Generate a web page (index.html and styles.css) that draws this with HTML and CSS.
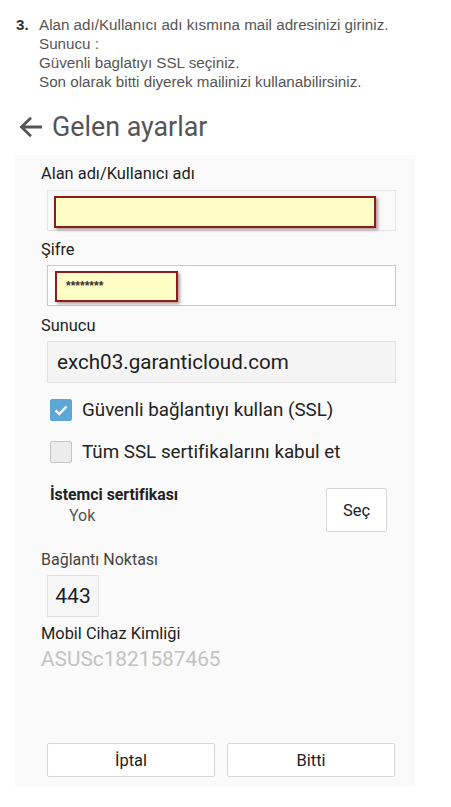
FILE: index.html
```html
<!DOCTYPE html>
<html lang="tr">
<head>
<meta charset="utf-8">
<title>Gelen ayarlar</title>
<link rel="stylesheet" href="styles.css">
</head>
<body>
<div class="instr">
  <div class="num">3.</div>
  <div class="lines">
    <div>Alan adı/Kullanıcı adı kısmına mail adresinizi giriniz.</div>
    <div>Sunucu :</div>
    <div>Güvenli baglatıyı SSL seçiniz.</div>
    <div>Son olarak bitti diyerek mailinizi kullanabilirsiniz.</div>
  </div>
</div>

<div class="title">
  <svg class="back" width="24" height="22" viewBox="0 0 24 22">
    <path d="M2.5 11 H23 M12 1.8 L2.5 11 L12 20.2" fill="none" stroke="#555" stroke-width="2.8"/>
  </svg>
  <span>Gelen ayarlar</span>
</div>

<div class="panel">
  <div class="label l1">Alan adı/Kullanıcı adı</div>
  <div class="field f1"><div class="mark m1"></div></div>

  <div class="label l2">Şifre</div>
  <div class="field f2"><div class="mark m2">********</div></div>

  <div class="label l3">Sunucu</div>
  <div class="field f3">exch03.garanticloud.com</div>

  <div class="check c1">
    <span class="box on">
      <svg width="22" height="22" viewBox="0 0 22 22"><path d="M5.5 11.5 L9.3 15 L16.5 7.5" fill="none" stroke="#fff" stroke-width="2.4"/></svg>
    </span>
    <span>Güvenli bağlantıyı kullan (SSL)</span>
  </div>
  <div class="check c2">
    <span class="box"></span>
    <span>Tüm SSL sertifikalarını kabul et</span>
  </div>

  <div class="cert">
    <div class="certtext">
      <div class="certtitle">İstemci sertifikası</div>
      <div class="certval">Yok</div>
    </div>
    <div class="btn sec">Seç</div>
  </div>

  <div class="label l4">Bağlantı Noktası</div>
  <div class="field f4">443</div>

  <div class="label l5">Mobil Cihaz Kimliği</div>
  <div class="devid">ASUSc1821587465</div>

  <div class="actions">
    <div class="btn act">İptal</div>
    <div class="btn act">Bitti</div>
  </div>
</div>
</body>
</html>
```
FILE: styles.css
```css
html, body {
  margin: 0;
  padding: 0;
  background: #ffffff;
}
body {
  width: 451px;
  font-family: Roboto, "Noto Sans", sans-serif;
  color: #222;
}
.instr {
  display: flex;
  padding: 15px 0 0 16px;
  font-family: "Liberation Sans", Arial, sans-serif;
  font-size: 15.2px;
  line-height: 19px;
  color: #555;
}
.num {
  width: 23px;
  font-weight: bold;
  color: #333;
}
.title {
  display: flex;
  align-items: center;
  margin: 20px 0 0 19px;
  height: 32px;
  font-size: 26.8px;
  color: #555;
}
.back {
  margin-right: 9px;
}
.panel {
  margin: 12px 0 0 15px;
  width: 374px;
  padding: 0 0 10px 26px;
  background: #fafafa;
}
.label {
  font-size: 16.4px;
  line-height: 20px;
  color: #222;
}
.l1 { padding-top: 9px; }
.l2 { margin-top: 9px; }
.l3 { margin-top: 10px; }
.l4 { margin-top: 18px; color: #444; font-size: 16px; }
.l5 { margin-top: 7px; }
.field {
  box-sizing: border-box;
  margin: 5px 0 0 6px;
  width: 349px;
  height: 41px;
  border: 1px solid #e6e6e6;
  background: #f9f9f9;
  position: relative;
}
.f1 { margin-top: 6px; }
.f2 {
  background: #ffffff;
  border-color: #a9d6dc;
}
.f3 {
  height: 42px;
  background: #f4f4f4;
  border-color: #e2e2e2;
  font-size: 20.6px;
  line-height: 40px;
  padding-left: 9px;
  color: #1e1e1e;
}
.f4 {
  width: 52px;
  height: 42px;
  background: #f6f6f6;
  border-color: #e2e2e2;
  font-size: 21px;
  line-height: 40px;
  text-align: center;
  color: #1e1e1e;
}
.mark {
  position: absolute;
  box-sizing: border-box;
  background: #fffdc6;
  border: 2px solid #8e1c1c;
  box-shadow: 2px 2px 3px rgba(90, 30, 30, 0.45);
}
.m1 {
  left: 6px;
  top: 5px;
  width: 322px;
  height: 32px;
}
.m2 {
  left: 7px;
  top: 5px;
  width: 123px;
  height: 31px;
  font-family: "Liberation Sans", Arial, sans-serif;
  font-size: 12px;
  font-weight: bold;
  line-height: 27px;
  padding-left: 9px;
  color: #333;
}
.check {
  display: flex;
  align-items: center;
  margin-left: 9px;
  height: 22px;
  font-size: 18.8px;
  color: #222;
}
.c1 { margin-top: 16px; }
.c2 { margin-top: 20px; }
.box {
  box-sizing: border-box;
  width: 22px;
  height: 22px;
  border-radius: 2px;
  margin-right: 10px;
  background: #ececec;
  border: 1px solid #c4c4c4;
  display: flex;
}
.box.on {
  background: #5ca7d6;
  border-color: #5ca7d6;
}
.box.on svg {
  margin: -1px;
}
.cert {
  display: flex;
  justify-content: space-between;
  align-items: flex-start;
  margin: 23px 0 0 9px;
  width: 337px;
}
.certtitle {
  font-size: 15.8px;
  font-weight: bold;
  line-height: 18px;
  color: #222;
}
.certval {
  margin-top: 3px;
  padding-left: 19px;
  font-size: 16px;
  line-height: 18px;
  color: #555;
}
.btn {
  box-sizing: border-box;
  background: #ffffff;
  border: 1px solid #d6d6d6;
  border-radius: 2px;
  display: flex;
  align-items: center;
  justify-content: center;
  color: #222;
  font-size: 16.5px;
}
.sec {
  width: 61px;
  height: 44px;
  margin-top: 2px;
}
.devid {
  margin-top: 3px;
  font-size: 20.8px;
  line-height: 24px;
  color: #c2c2c2;
}
.actions {
  display: flex;
  gap: 12px;
  margin: 72px 0 0 6px;
}
.act {
  width: 168px;
  height: 34px;
}
```
